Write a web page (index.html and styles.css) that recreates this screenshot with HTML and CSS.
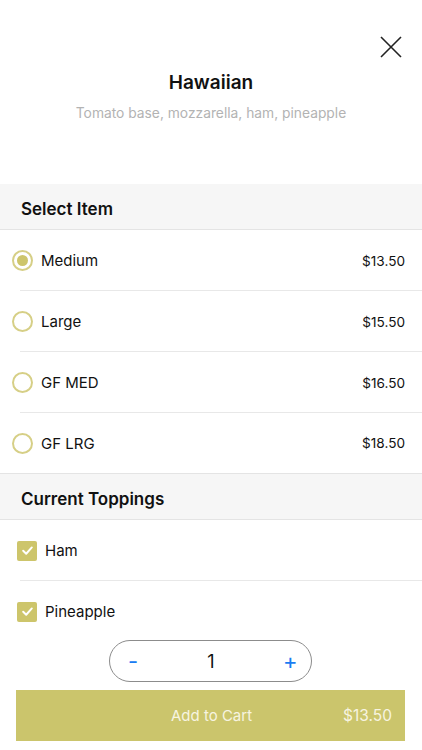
FILE: index.html
```html
<!DOCTYPE html>
<html lang="en">
<head>
  <meta charset="UTF-8">
  <title>Hawaiian</title>
  <link rel="stylesheet" href="styles.css">
</head>
<body>

<div class="top">
  <div class="close-row">
    <svg class="close" width="22" height="22" viewBox="0 0 22 22">
      <path d="M1 1 L21 21 M21 1 L1 21" stroke="#222" stroke-width="1.6" fill="none"/>
    </svg>
  </div>
  <h1 class="title">Hawaiian</h1>
  <p class="desc">Tomato base, mozzarella, ham, pineapple</p>
</div>

<div class="section-head">Select Item</div>
<div class="option sep">
  <span class="radio checked"></span>
  <span class="label">Medium</span>
  <span class="price">$13.50</span>
</div>
<div class="option sep">
  <span class="radio"></span>
  <span class="label">Large</span>
  <span class="price">$15.50</span>
</div>
<div class="option sep">
  <span class="radio"></span>
  <span class="label">GF MED</span>
  <span class="price">$16.50</span>
</div>
<div class="option last">
  <span class="radio"></span>
  <span class="label">GF LRG</span>
  <span class="price">$18.50</span>
</div>

<div class="section-head">Current Toppings</div>
<div class="topping sep">
  <span class="check">
    <svg width="13" height="13" viewBox="0 0 12 12"><path d="M2 6.2 L4.8 9 L10 3.2" stroke="#fff" stroke-width="1.8" fill="none" stroke-linecap="round" stroke-linejoin="round"/></svg>
  </span>
  <span class="label">Ham</span>
</div>
<div class="topping">
  <span class="check">
    <svg width="13" height="13" viewBox="0 0 12 12"><path d="M2 6.2 L4.8 9 L10 3.2" stroke="#fff" stroke-width="1.8" fill="none" stroke-linecap="round" stroke-linejoin="round"/></svg>
  </span>
  <span class="label">Pineapple</span>
</div>

<div class="footer">
  <div class="stepper">
    <span class="step-btn">-</span>
    <span class="qty">1</span>
    <span class="step-btn plus">+</span>
  </div>
  <div class="cart-btn">
    <span class="cart-label">Add to Cart</span>
    <span class="cart-price">$13.50</span>
  </div>
</div>

</body>
</html>
```

FILE: styles.css
```css
body {
  margin: 0;
  font-family: Inter, "Liberation Sans", sans-serif;
  color: #111;
  background: #fff;
}
.top {
  height: 184px;
  box-sizing: border-box;
  padding: 36px 20px 0;
  text-align: center;
}
.close-row {
  display: flex;
  justify-content: flex-end;
  height: 22px;
}
.title {
  margin: 13px 0 0;
  font-size: 19px;
  line-height: 24px;
  font-weight: 600;
}
.desc {
  margin: 8px 0 0;
  font-size: 13.8px;
  line-height: 20px;
  color: #b3b3b3;
}
.section-head {
  height: 46px;
  box-sizing: border-box;
  padding: 5px 0 0 21px;
  display: flex;
  align-items: center;
  background: #f6f6f6;
  border-bottom: 1px solid #e4e4e4;
  font-size: 17px;
  font-weight: 600;
}
.option, .topping {
  height: 61px;
  box-sizing: border-box;
  display: flex;
  align-items: center;
  font-size: 15px;
}
.sep {
  background: linear-gradient(#e8e8e8, #e8e8e8) no-repeat 20px 100% / calc(100% - 20px) 1px;
}
.last {
  border-bottom: 1px solid #e4e4e4;
}
.option {
  padding: 0 17px 0 12px;
}
.radio {
  width: 21px;
  height: 21px;
  box-sizing: border-box;
  border: 2px solid #d6cf86;
  border-radius: 50%;
  display: flex;
  align-items: center;
  justify-content: center;
  margin-right: 8px;
}
.radio.checked::before {
  content: "";
  width: 11px;
  height: 11px;
  border-radius: 50%;
  background: #cdc56b;
}
.label {
  flex: 1;
}
.price {
  font-size: 13.6px;
}
.topping {
  padding: 0 17px;
}
.check {
  width: 20px;
  height: 20px;
  border-radius: 2px;
  background: #cdc56b;
  display: flex;
  align-items: center;
  justify-content: center;
  margin-right: 8px;
}
.footer {
  display: flex;
  flex-direction: column;
  align-items: center;
  padding: 0 17px 9px 16px;
  margin-top: -2px;
}
.stepper {
  width: 203px;
  height: 42px;
  box-sizing: border-box;
  border: 1px solid #8c8c8c;
  border-radius: 21px;
  display: flex;
  align-items: center;
  justify-content: space-between;
  padding: 0 16px 0 17px;
}
.step-btn {
  color: #1a7cf2;
  font-size: 22px;
  width: 12px;
  text-align: center;
}
.qty {
  font-size: 18px;
}
.cart-btn {
  margin-top: 8px;
  align-self: stretch;
  height: 51px;
  background: #cbc56c;
  display: flex;
  align-items: center;
  padding-right: 13px;
  color: #f7f4e0;
}
.cart-label {
  flex: 1;
  text-align: center;
  padding-left: 64px;
  font-size: 15px;
}
.cart-price {
  font-size: 15.5px;
}
```
